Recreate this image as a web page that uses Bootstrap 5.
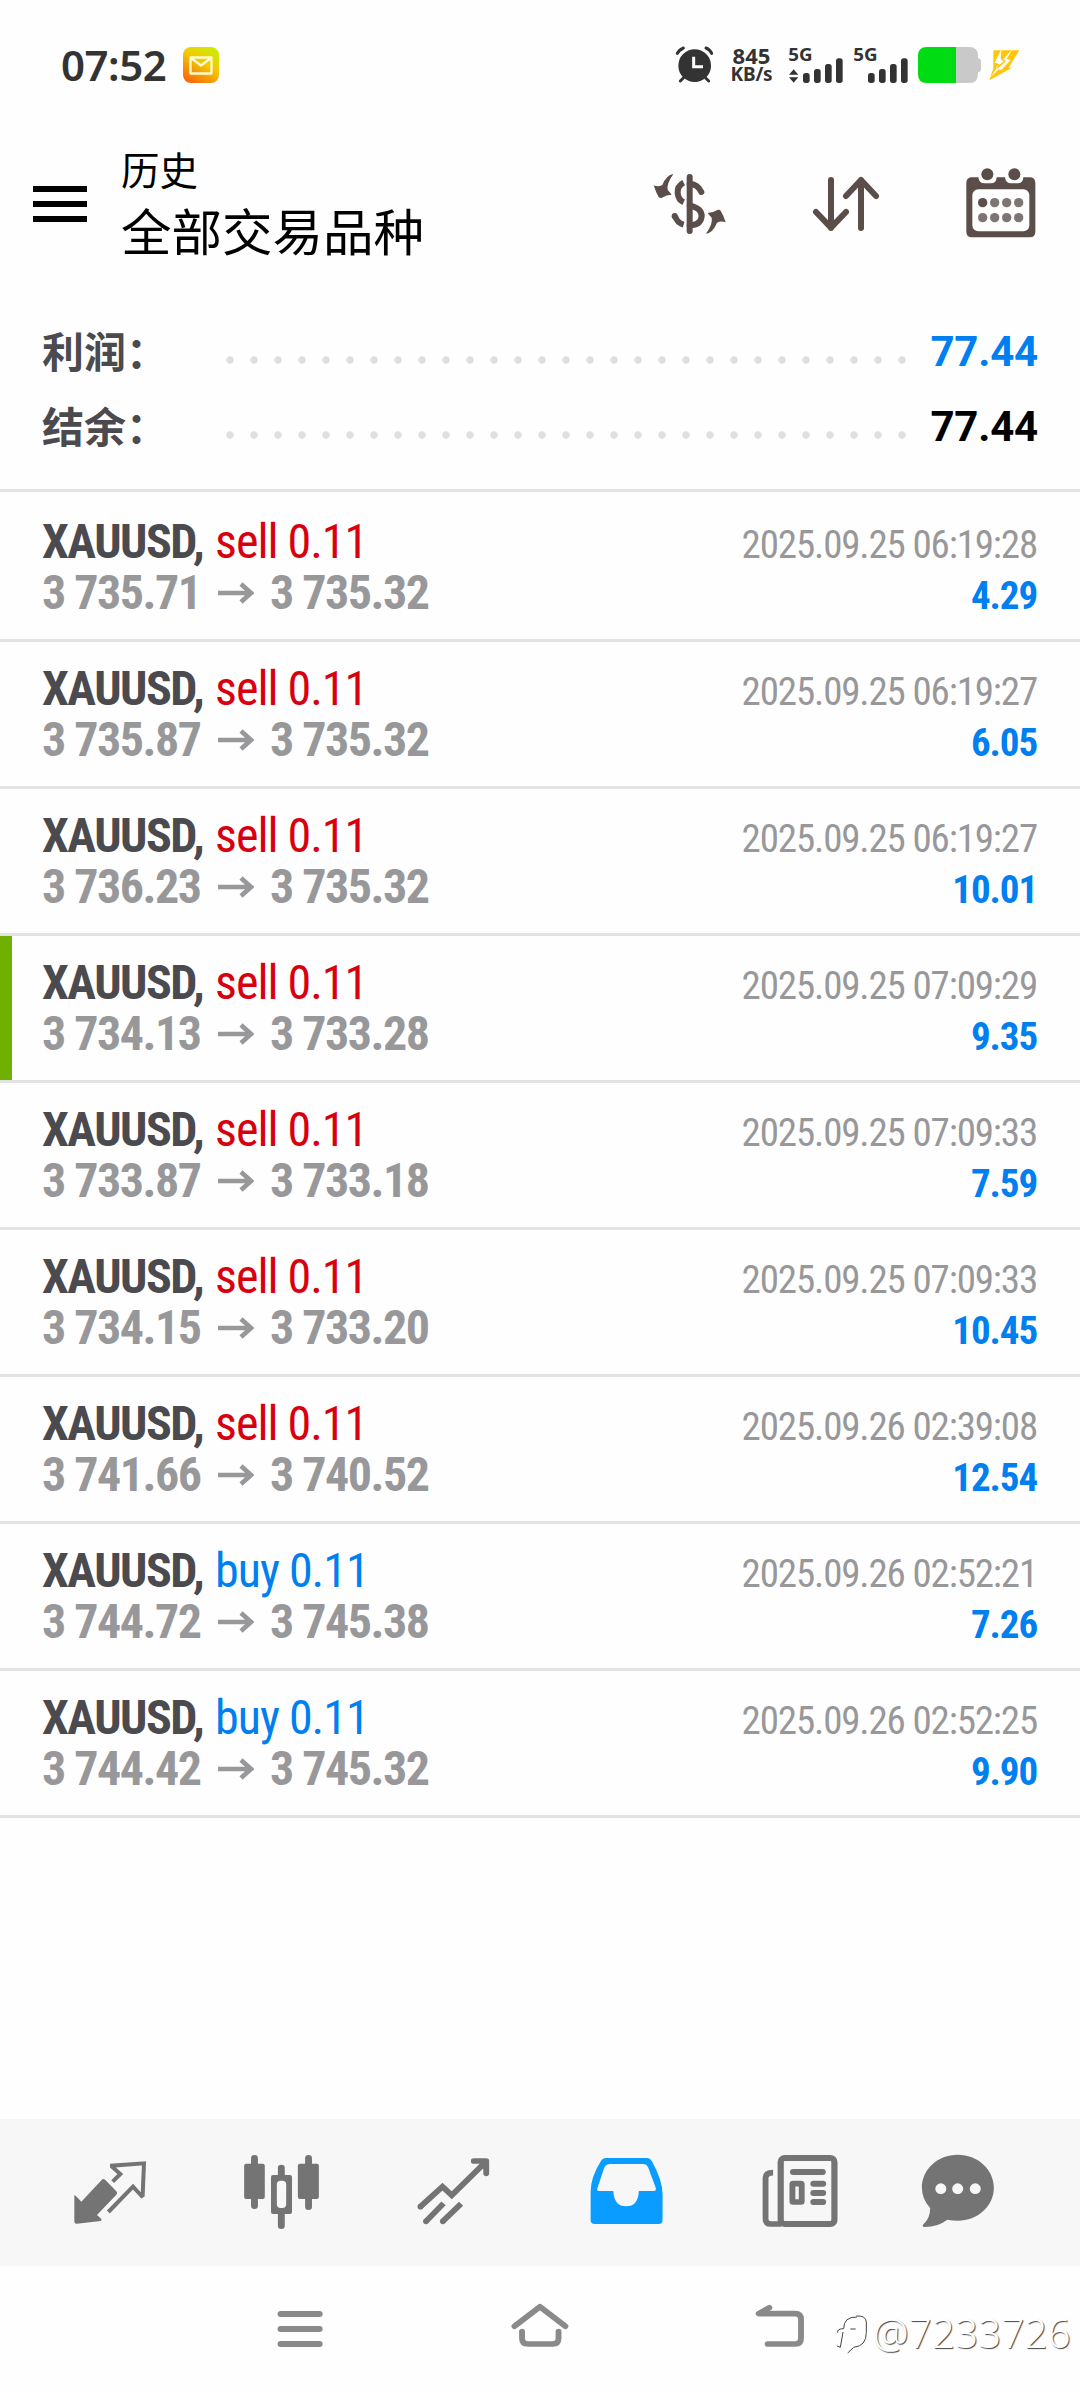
<!DOCTYPE html>
<html lang="zh-CN">
<head>
<meta charset="utf-8">
<meta name="viewport" content="width=device-width, initial-scale=1">
<title>历史</title>
<link href="https://cdn.jsdelivr.net/npm/bootstrap@5.3.0/dist/css/bootstrap.min.css" rel="stylesheet">
<style>
  body { font-family: Roboto, "Noto Sans CJK SC", sans-serif; color: #000; background: #fefefe; }
  svg { display: block; flex: none; overflow: visible; }
  .screen { width: 1080px; height: 2392px; }
  .status-bar { height: 130px; padding: 0 53px 0 61px; color: #333; font-family: "Noto Sans", sans-serif; }
  .clock { font-size: 42px; font-weight: 600; line-height: 40px; width: 122px; letter-spacing: -.5px; }
  .speed { width: 47px; margin: 0 12px 0 14px; font-weight: 700; text-align: center; white-space: nowrap; }
  .speed-num { font-size: 22px; line-height: 19px; }
  .speed-unit { font-size: 19px; line-height: 19px; letter-spacing: -.2px; }
  .app-bar { height: 148px; padding: 0 44px 0 33px; }
  .title-sm { font-size: 38.500px; line-height: 50px; }
  .title-lg { font-size: 50.500px; line-height: 66px; margin-top: 3px; }
  .titles { margin-left: 34px; margin-top: -3px; font-family: "Noto Sans CJK SC", sans-serif; }
  .tool-sort { margin-left: 85px; }
  .tool-cal { margin-left: 86px; margin-bottom: 3px; }
  .summary { height: 214px; padding: 36px 42px 0 42px; border-bottom: 3px solid #e3e3e4; }
  .sum-row { height: 75px; font-weight: 700; font-size: 42px; line-height: 75px; }
  .sum-label { width: 176px; height: 75px; line-height: 71px; color: #4b4a4e; white-space: nowrap; font-family: "Noto Sans CJK SC", sans-serif; }
  .dots { width: 696px; height: 10px; margin-top: 16px; background: radial-gradient(circle at 12px 5px, #e0e0e0 3.4px, transparent 4.1px) 0 0 / 24px 10px; }
  .sum-val { letter-spacing: -.2px; }
  .c-blue { color: #007ff0; }
  .c-red { color: #d8000f; }
  .deals { padding-top: 3px; font-family: "Roboto Condensed", Roboto, sans-serif; }
  .deal { height: 147px; padding: 21px 43px 0 42px; border-bottom: 3px solid #e3e3e4; }
  .deal-picked { box-shadow: inset 12px 0 0 #6fb100; }
  .line-a { height: 51px; line-height: 51px; font-size: 48px; }
  .line-b { height: 51px; line-height: 51px; font-size: 48px; font-weight: 700; color: #98989a; letter-spacing: -1.5px; }
  .pair { font-weight: 700; color: #4b4a4e; width: 173px; white-space: nowrap; letter-spacing: -1.500px; }
  .side { white-space: nowrap; letter-spacing: -1px; }
  .stamp { font-size: 39px; color: #98989a; padding-top: 4px; letter-spacing: -1.150px; }
  .gain { font-size: 39px; padding-top: 7px; letter-spacing: -1.100px; }
  .open-price { width: 176px; white-space: nowrap; }
  .to-arrow { width: 36px; height: 24px; margin-right: 16px; }
  .tab-bar { height: 147px; background: #f7f7f7; color: #747474; }
  .sys-bar { height: 126px; padding-left: 265px; color: #8a8a8a; }
  .sys-gap { margin-left: 170px; }
  .watermark { margin-left: 25px; padding-top: 39px; color: #fff; font-family: "Noto Sans", sans-serif; font-weight: 300; font-size: 40px; line-height: 56px; letter-spacing: .3px; text-shadow: 1px 1px 1px #444; white-space: nowrap; }
  .wm-tag { margin-right: 2px; }
</style>
</head>
<body>
<svg width="0" height="0" class="position-absolute">
  <symbol id="arrow" viewBox="0 0 36 24"><path d="M0 12H33M23 3l10 9-10 9" fill="none" stroke="#98989a" stroke-width="4.6"/></symbol>
</svg>
<div class="screen d-flex flex-column overflow-hidden">

  <div class="status-bar d-flex align-items-center">
    <div class="clock">07:52</div>
    <svg width="36" height="38" viewBox="0 0 36 38">
      <defs><linearGradient id="mg" x1=".85" y1="0" x2=".25" y2="1"><stop offset="0" stop-color="#cbee00"/><stop offset=".45" stop-color="#f3c900"/><stop offset="1" stop-color="#f86a0c"/></linearGradient></defs>
      <rect y="1" width="36" height="36" rx="8" fill="url(#mg)"/>
      <path d="M7.500 11.500h21v16h-21zM8 12l10 7.500L28 12" fill="none" stroke="#fffbd0" stroke-width="2.300" stroke-linejoin="round"/>
    </svg>
    <svg class="ms-auto" width="38" height="38" viewBox="168 79 114 114">
      <g fill="none" stroke="#333" stroke-width="9" stroke-linecap="round">
        <circle cx="224" cy="138" r="49" fill="#333" stroke="none"/>
        <path d="M172 101Q178 90 190 85M275 101Q270 90 258 85M190 175l-9 9M257 175l9 9"/>
        <path d="M221 111v30h28" stroke="#fff" stroke-linecap="butt"/>
      </g>
    </svg>
    <div class="speed"><div class="speed-num">845</div><div class="speed-unit">KB/s</div></div>
    <svg width="240" height="40" viewBox="501 75 720 120">
      <g fill="#333">
        <text x="505" y="123" font-family="Noto Sans" font-weight="700" font-size="55" textLength="73" lengthAdjust="spacingAndGlyphs">5G</text>
        <text x="700" y="123" font-family="Noto Sans" font-weight="700" font-size="55" textLength="73" lengthAdjust="spacingAndGlyphs">5G</text>
        <path d="M507 164l14-16 14 16zM507 172l14 16 14-16z"/>
        <rect x="549" y="159" width="20" height="30" rx="8"/><rect x="582" y="147" width="20" height="42" rx="8"/><rect x="615" y="132" width="20" height="57" rx="8"/><rect x="648" y="115" width="20" height="74" rx="8"/>
        <rect x="744" y="159" width="20" height="30" rx="8"/><rect x="777" y="147" width="20" height="42" rx="8"/><rect x="810" y="132" width="20" height="57" rx="8"/><rect x="843" y="115" width="20" height="74" rx="8"/>
      </g>
      <path d="M1008 81h40q26 0 26 26v8q9 1 9 10v22q0 9-9 10v6q0 26-26 26h-40z" fill="#c9c9c9"/>
      <path d="M1008 81v108h-88q-26 0-26-26v-56q0-26 26-26z" fill="#00dc14"/>
      <path d="M1120 91H1198L1166 143H1176L1108 181L1120 145z" fill="#ffc60a"/>
      <path d="M1144 88L1124 128L1138 132L1112 172L1136 148L1128 142L1152 124L1142 118zM1178 86L1150 118L1158 124L1132 146L1144 150L1172 120L1160 116z" fill="#fff"/>
    </svg>
  </div>

  <div class="app-bar d-flex align-items-center">
    <svg width="54" height="36" viewBox="0 0 54 36"><path d="M0 3h54M0 18h54M0 33h54" stroke="#000" stroke-width="6"/></svg>
    <div class="titles"><div class="title-sm">历史</div><div class="title-lg">全部交易品种</div></div>
    <svg class="ms-auto" width="74" height="62" viewBox="40 39 222 186">
      <g fill="none" stroke="#5a4d4a" stroke-width="18" stroke-linecap="round">
        <path d="M150 51V213"/>
        <path d="M132 68Q112 78 114 100Q116 120 132 127M106 168Q112 188 132 194" stroke-linecap="butt"/>
        <path d="M105 168v1"/>
        <path d="M150 72Q174 72 185 96M150 137Q186 144 186 168Q184 195 150 196"/>
      </g>
      <g fill="#5a4d4a"><path id="curl" d="M101 42Q80 45 68 75Q55 82 42 76Q48 96 57 111Q61 116 67 113Q80 104 96 104Q91 97 84 90Q80 72 101 42z"/><use href="#curl" transform="rotate(180 150 131.500)"/></g>
    </svg>
    <svg class="tool-sort" width="68" height="56" viewBox="576 468 204 168"><path d="M633 480V624M588 576l45 47 45-47M723 624V480M678 528l45-48 45 48" fill="none" stroke="#5a4d4a" stroke-width="18" stroke-linecap="round" stroke-linejoin="round"/></svg>
    <svg class="tool-cal" width="70" height="70" viewBox="1037 443 210 210">
      <path d="M1055 471h19q2 18 18 18h20q16 0 17-18h25q2 18 18 18h20q16 0 17-18h19q17 0 17 17v146q0 17-17 17h-173q-17 0-17-17V488q0-17 17-17z" fill="#5a4d4a"/>
      <rect x="1056" y="507" width="171" height="126" rx="18" fill="#fefefe"/>
      <circle cx="1101" cy="462" r="18" fill="#5a4d4a"/><circle cx="1182" cy="462" r="18" fill="#5a4d4a"/>
      <g fill="#7c7573"><circle cx="1087" cy="547" r="14" fill="#5a4d4a"/><circle cx="1123" cy="547" r="14"/><circle cx="1159" cy="547" r="14"/><circle cx="1195" cy="547" r="14"/><circle cx="1087" cy="592" r="14"/><circle cx="1123" cy="592" r="14"/><circle cx="1159" cy="592" r="14"/><circle cx="1195" cy="592" r="14"/></g>
    </svg>
  </div>

  <div class="summary">
    <div class="sum-row d-flex align-items-center"><div class="sum-label">利润：</div><div class="dots"></div><div class="sum-val c-blue ms-auto">77.44</div></div>
    <div class="sum-row d-flex align-items-center"><div class="sum-label">结余：</div><div class="dots"></div><div class="sum-val ms-auto">77.44</div></div>
  </div>

  <div class="deals">
    <div class="deal">
      <div class="line-a d-flex"><div class="pair">XAUUSD,</div><div class="side c-red">sell 0.11</div><div class="stamp ms-auto">2025.09.25 06:19:28</div></div>
      <div class="line-b d-flex align-items-center"><div class="open-price">3 735.71</div><svg class="to-arrow"><use href="#arrow"/></svg><div>3 735.32</div><div class="gain c-blue ms-auto">4.29</div></div>
    </div>
    <div class="deal">
      <div class="line-a d-flex"><div class="pair">XAUUSD,</div><div class="side c-red">sell 0.11</div><div class="stamp ms-auto">2025.09.25 06:19:27</div></div>
      <div class="line-b d-flex align-items-center"><div class="open-price">3 735.87</div><svg class="to-arrow"><use href="#arrow"/></svg><div>3 735.32</div><div class="gain c-blue ms-auto">6.05</div></div>
    </div>
    <div class="deal">
      <div class="line-a d-flex"><div class="pair">XAUUSD,</div><div class="side c-red">sell 0.11</div><div class="stamp ms-auto">2025.09.25 06:19:27</div></div>
      <div class="line-b d-flex align-items-center"><div class="open-price">3 736.23</div><svg class="to-arrow"><use href="#arrow"/></svg><div>3 735.32</div><div class="gain c-blue ms-auto">10.01</div></div>
    </div>
    <div class="deal deal-picked">
      <div class="line-a d-flex"><div class="pair">XAUUSD,</div><div class="side c-red">sell 0.11</div><div class="stamp ms-auto">2025.09.25 07:09:29</div></div>
      <div class="line-b d-flex align-items-center"><div class="open-price">3 734.13</div><svg class="to-arrow"><use href="#arrow"/></svg><div>3 733.28</div><div class="gain c-blue ms-auto">9.35</div></div>
    </div>
    <div class="deal">
      <div class="line-a d-flex"><div class="pair">XAUUSD,</div><div class="side c-red">sell 0.11</div><div class="stamp ms-auto">2025.09.25 07:09:33</div></div>
      <div class="line-b d-flex align-items-center"><div class="open-price">3 733.87</div><svg class="to-arrow"><use href="#arrow"/></svg><div>3 733.18</div><div class="gain c-blue ms-auto">7.59</div></div>
    </div>
    <div class="deal">
      <div class="line-a d-flex"><div class="pair">XAUUSD,</div><div class="side c-red">sell 0.11</div><div class="stamp ms-auto">2025.09.25 07:09:33</div></div>
      <div class="line-b d-flex align-items-center"><div class="open-price">3 734.15</div><svg class="to-arrow"><use href="#arrow"/></svg><div>3 733.20</div><div class="gain c-blue ms-auto">10.45</div></div>
    </div>
    <div class="deal">
      <div class="line-a d-flex"><div class="pair">XAUUSD,</div><div class="side c-red">sell 0.11</div><div class="stamp ms-auto">2025.09.26 02:39:08</div></div>
      <div class="line-b d-flex align-items-center"><div class="open-price">3 741.66</div><svg class="to-arrow"><use href="#arrow"/></svg><div>3 740.52</div><div class="gain c-blue ms-auto">12.54</div></div>
    </div>
    <div class="deal">
      <div class="line-a d-flex"><div class="pair">XAUUSD,</div><div class="side c-blue">buy 0.11</div><div class="stamp ms-auto">2025.09.26 02:52:21</div></div>
      <div class="line-b d-flex align-items-center"><div class="open-price">3 744.72</div><svg class="to-arrow"><use href="#arrow"/></svg><div>3 745.38</div><div class="gain c-blue ms-auto">7.26</div></div>
    </div>
    <div class="deal">
      <div class="line-a d-flex"><div class="pair">XAUUSD,</div><div class="side c-blue">buy 0.11</div><div class="stamp ms-auto">2025.09.26 02:52:25</div></div>
      <div class="line-b d-flex align-items-center"><div class="open-price">3 744.42</div><svg class="to-arrow"><use href="#arrow"/></svg><div>3 745.32</div><div class="gain c-blue ms-auto">9.90</div></div>
    </div>
  </div>

  <div class="tab-bar mt-auto d-flex justify-content-center">
    <svg width="172" height="147" viewBox="24 2119 172 147"><g transform="translate(60 2140) scale(.3333)">
      <path d="M43 165q8 5 21 20l61-65q5-6 11 0l33 34q5 5 0 10l-58 61 14 13-3 5-71 8q-8 1-8-8z" fill="currentColor"/>
      <path d="M158 125l23-23-25-22 0-3 96-7-4 96-3 2-26-28-74 76" fill="none" stroke="currentColor" stroke-width="12"/>
    </g></svg>
    <svg width="172" height="147" viewBox="196 2119 172 147"><g transform="translate(0 2100) scale(.34435 .33333)" fill="currentColor">
      <rect x="729" y="165" width="20" height="162" rx="10"/><rect x="709" y="191" width="60" height="106" rx="6"/>
      <rect x="886" y="165" width="20" height="165" rx="10"/><rect x="865" y="191" width="61" height="106" rx="6"/>
      <rect x="807" y="194" width="20" height="193" rx="10"/><rect x="787" y="225" width="61" height="117" rx="6"/><rect x="804" y="242" width="27" height="82" rx="11" fill="#f7f7f7"/>
    </g></svg>
    <svg width="172" height="147" viewBox="368 2119 172 147"><g transform="translate(0 2100) scale(.34435 .33333)" fill="none" stroke="currentColor" stroke-width="17">
      <path d="M1221 320l64-60 27 26 96-98" stroke-linejoin="miter"/><path d="M1221 320h.1M1237 364h.1M1286 364h.1M1376 183h36v37" stroke-linecap="round" stroke-linejoin="round"/>
      <path d="M1237 364l51-54M1286 364l53-53"/><path d="M1390 192h20v20z" fill="currentColor" stroke="none"/>
    </g></svg>
    <svg width="172" height="147" viewBox="540 2119 172 147"><g transform="translate(540 2100) scale(.34435 .33333)">
      <path d="M192 174h118q10 0 15 10 31 57 31 100v76q0 12-12 12H159q-12 0-12-12v-85q0-43 30-92 5-9 15-9z" fill="#0a9dff"/>
      <path d="M204 192h94q12 0 16 10l22 61q3 10-6 10h-43q-2 46-37 46t-37-46h-41q-9 0-5-10l20-61q5-10 17-10z" fill="#f7f7f7"/>
    </g></svg>
    <svg width="172" height="147" viewBox="712 2119 172 147"><g transform="translate(540 2100) scale(.34435 .33333)" fill="none" stroke="currentColor" stroke-width="18">
      <rect x="699" y="174" width="156" height="198" rx="12"/><path d="M677 218q-22 0-22 16v122q0 16 16 16h30" stroke-width="17"/>
      <path d="M735 216h86M794 251h28M794 279h28M794 306h28" stroke-linecap="round"/><rect x="733" y="251" width="27" height="55" rx="2" stroke-width="17"/>
    </g></svg>
    <svg width="172" height="147" viewBox="884 2119 172 147"><g transform="translate(540 2100) scale(.34435 .33333)">
      <path d="M1213 164c58 0 105 44 105 99s-47 99-105 99q-15 0-30-3-28 22-66 22-10-1-3-9 19-17 19-48-24-27-24-61c0-55 46-99 104-99z" fill="currentColor"/>
      <g fill="#f7f7f7"><circle cx="1164" cy="266" r="16"/><circle cx="1213" cy="266" r="16"/><circle cx="1264" cy="266" r="16"/></g>
    </g></svg>
  </div>

  <div class="sys-bar d-flex">
    <svg width="70" height="126" viewBox="265 2266 70 126"><g transform="translate(0 2100) scale(.34435 .33333)" stroke="currentColor" stroke-width="18" stroke-linecap="round"><path d="M815 642h113M815 687h113M815 732h113"/></g></svg>
    <svg class="sys-gap" width="70" height="126" viewBox="505 2266 70 126"><g transform="translate(0 2100) scale(.34435 .33333)" fill="none" stroke="currentColor" stroke-width="17" stroke-linecap="round" stroke-linejoin="round"><path d="M1494 679l74-59 74 59M1516 695v20q0 17 17 17h72q17 0 17-17v-20"/></g></svg>
    <svg class="sys-gap" width="65" height="126" viewBox="745 2266 65 126"><g transform="translate(540 2100) scale(.34435 .33333)" fill="none" stroke="currentColor" stroke-width="17" stroke-linecap="round" stroke-linejoin="round"><path d="M666 623l-31 18h106q17 0 17 17v57q0 17-17 17h-80"/></g></svg>
    <div class="watermark d-flex align-items-center align-self-start flex-shrink-0">
      <svg class="wm-tag" width="36" height="42" viewBox="46 78 108 126" fill="none" stroke="#444" stroke-width="3"><path d="M72 128q0-36 40-35M110 90q28-2 30 18v32q0 40-38 44l-18 17M72 128q-20 0-18 12M92 129h16M70 138l-8 46M52 180l10 4"/></svg><span>@7233726</span>
    </div>
  </div>
</div>
<script src="https://cdn.jsdelivr.net/npm/bootstrap@5.3.0/dist/js/bootstrap.bundle.min.js"></script>
</body>
</html>
